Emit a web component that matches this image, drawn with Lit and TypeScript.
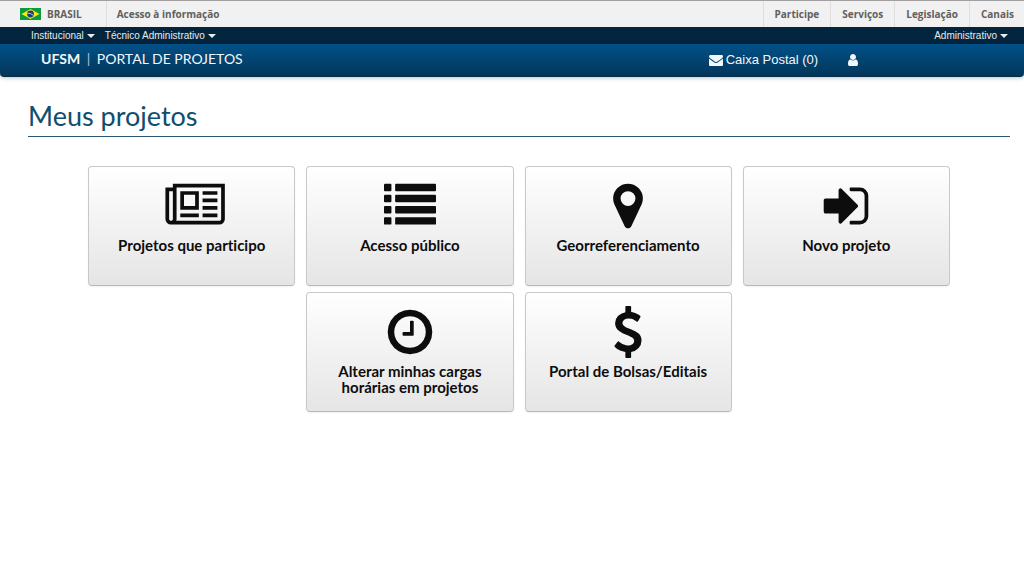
import { LitElement, html, css, svg } from "lit";
import { customElement, property } from "lit/decorators.js";

const ICONS: Record<string, { box: string; body: unknown }> = {
  newspaper: {
    box: "-256 0 2304 1792",
    body: svg`<path d="M1024 512h-384v384h384v-384zm128 640v128h-640v-128h640zm0-768v640h-640v-640h640zm640 768v128h-512v-128h512zm0-256v128h-512v-128h512zm0-256v128h-512v-128h512zm0-256v128h-512v-128h512zm-1536 960v-960h-128v960q0 26 19 45t45 19 45-19 19-45zm1664 0v-1088h-1536v1088q0 33-11 64h1483q26 0 45-19t19-45zm128-1216v1216q0 80-56 136t-136 56h-1664q-80 0-136-56t-56-136v-1088h256v-128h1792z"/>`,
  },
  list: {
    box: "0 0 1792 1792",
    body: [128, 512, 896, 1280].map(
      (y) => svg`<rect x="0" y=${y} width="256" height="256" rx="32"/><rect x="384" y=${y} width="1408" height="256" rx="32"/>`
    ),
  },
  marker: {
    box: "0 0 1792 1792",
    body: svg`<path d="M1152 640q0-106-75-181t-181-75-181 75-75 181 75 181 181 75 181-75 75-181zm256 0q0 109-33 179l-364 774q-16 33-47.5 52t-67.5 19-67.5-19-46.5-52l-365-774q-33-70-33-179 0-212 150-362t362-150 362 150 150 362z"/>`,
  },
  enter: {
    box: "0 0 1792 1792",
    body: svg`<path d="M1312 896q0 26-19 45l-544 544q-19 19-45 19t-45-19-19-45v-288h-448q-26 0-45-19t-19-45v-384q0-26 19-45t45-19h448v-288q0-26 19-45t45-19 45 19l544 544q19 19 19 45zm352-352v704q0 119-84.5 203.5t-203.5 84.5h-320q-13 0-22.5-9.5t-9.5-22.5q0-4-1-20t-.5-26.5 3-23.5 10-19.5 20.5-6.5h320q66 0 113-47t47-113v-704q0-66-47-113t-113-47h-312l-11.5-1-11.5-3-8-5.5-7-9-2-13.5q0-4-1-20t-.5-26.5 3-23.5 10-19.5 20.5-6.5h320q119 0 203.5 84.5t84.5 203.5z"/>`,
  },
  clock: {
    box: "0 0 1792 1792",
    body: svg`<path d="M1024 544v448q0 14-9 23t-23 9h-320q-14 0-23-9t-9-23v-64q0-14 9-23t23-9h224v-352q0-14 9-23t23-9h64q14 0 23 9t9 23zm416 352q0-148-73-273t-198-198-273-73-273 73-198 198-73 273 73 273 198 198 273 73 273-73 198-198 73-273zm224 0q0 209-103 385.5t-279.5 279.5-385.5 103-385.5-103-279.5-279.5-103-385.5 103-385.5 279.5-279.5 385.5-103 385.5 103 279.5 279.5 103 385.5z"/>`,
  },
  dollar: {
    box: "0 0 1792 1792",
    body: svg`<path d="M1362 1185q0 153-99.5 263.5t-258.5 136.5v175q0 14-9 23t-23 9h-135q-13 0-22.5-9.5t-9.5-22.5v-175q-66-9-127.5-31t-101.5-44.5-74-48-46.5-37.5-17.5-18q-17-21-2-41l103-135q7-10 23-12 15-2 24 9l2 2q113 99 243 125 37 8 74 8 81 0 142.5-43t61.5-122q0-28-15-53t-33.5-42-58.5-37.5-66-32-80-32.5q-39-16-61.5-25t-61.5-26.5-62.5-31-56.5-35.5-53.5-42.5-43.5-49-35.5-58-21-66.5-8.5-78q0-138 98-242t255-134v-180q0-13 9.5-22.5t22.5-9.5h135q14 0 23 9t9 23v176q57 6 110.5 23t87 33.5 63.5 37.5 39 29 15 14q17 18 5 38l-81 146q-8 15-23 16-14 3-27-7-3-3-14.5-12t-39-26.5-58.5-32-74.5-26-85.5-11.5q-95 0-155 43t-60 111q0 26 8.5 48t29.5 41.5 39.5 33 56 31 60.5 27 70 27.5q53 20 81 31.5t76 35 75.5 42.5 62 50 53 63.5 31.5 76.5 13 94z"/>`,
  },
  envelope: {
    box: "0 0 1792 1792",
    body: svg`<path d="M1792 710v794q0 66-47 113t-113 47h-1472q-66 0-113-47t-47-113v-794q44 49 101 87 362 246 497 345 57 42 92.5 65.5t94.5 48 110 24.5h2q51 0 110-24.5t94.5-48 92.5-65.5q170-123 498-345 57-39 100-87zm0-294q0 79-49 151t-122 123q-376 261-468 325-10 7-42.5 31t-54 38.5-52 32.5-57.5 27-50 9h-2q-23 0-50-9t-57.5-27-52-32.5-54-38.5-42.5-31q-91-64-262-182.5t-205-142.5q-62-42-117-115.5t-55-136.5q0-78 41.5-130t118.5-52h1472q65 0 112.5 47t47.5 113z"/>`,
  },
  user: {
    box: "0 0 1792 1792",
    body: svg`<path d="M1536 1399q0 109-62.5 187t-150.5 78h-854q-88 0-150.5-78t-62.5-187q0-85 8.5-160.5t31.5-152 58.5-131 94-89 134.5-34.5q131 128 313 128t313-128q76 0 134.5 34.5t94 89 58.5 131 31.5 152 8.5 160.5zm-256-887q0 159-112.5 271.5t-271.5 112.5-271.5-112.5-112.5-271.5 112.5-271.5 271.5-112.5 271.5 112.5 112.5 271.5z"/>`,
  },
};

@customElement("ui-icon")
export class UiIcon extends LitElement {
  @property() name = "list";

  static styles = css`
    :host {
      display: block;
      height: 14px;
    }
    .glyph {
      display: block;
      height: 100%;
      margin: 0 auto;
      fill: currentColor;
    }
  `;

  render() {
    const icon = ICONS[this.name];
    return html`<svg class="glyph" viewBox=${icon.box} aria-hidden="true">${icon.body}</svg>`;
  }
}

@customElement("gov-bar")
export class GovBar extends LitElement {
  static styles = css`
    :host {
      display: block;
      background: #f1f1f1;
      border-top: 1px solid #a09e9e;
      font: 700 10px/26px "Open Sans", sans-serif;
    }
    .bar,
    .links {
      display: flex;
    }
    .links {
      margin-left: auto;
      padding-right: 10px;
    }
    a {
      color: #606060;
      text-decoration: none;
      white-space: nowrap;
      padding: 0 11px;
      border-left: 1px solid #dedede;
    }
    .links a:last-child {
      padding-right: 0;
    }
    .brand {
      display: flex;
      align-items: center;
      gap: 6px;
      padding: 0 24px 0 20px;
      border-left: 0;
    }
    .info {
      padding-left: 10px;
    }
  `;

  render() {
    return html`
      <nav class="bar">
        <a class="brand" href="#">
          <svg width="21" height="12" viewBox="0 0 21 12" aria-hidden="true">
            <rect width="21" height="12" fill="#0b9a3e" />
            <path d="M10.5 1 19.5 6 10.5 11 1.5 6z" fill="#fbe51b" />
            <circle cx="10.5" cy="6" r="3.4" fill="#1c3f78" />
            <path d="M7.3 5.2q3.6-.4 6.1 2.2" fill="none" stroke="#d5e4ea" stroke-width=".8" />
          </svg>
          BRASIL
        </a>
        <a class="info" href="#">Acesso à informação</a>
        <div class="links">
          ${["Participe", "Serviços", "Legislação", "Canais"].map((t) => html`<a href="#">${t}</a>`)}
        </div>
      </nav>
    `;
  }
}

@customElement("portal-header")
export class PortalHeader extends LitElement {
  static styles = css`
    :host {
      display: block;
      color: #fff;
      font-family: "Liberation Sans", Arial, sans-serif;
    }
    .menus {
      display: flex;
      gap: 10px;
      padding: 0 16px 0 31px;
      background: #03253d;
    }
    button {
      display: flex;
      align-items: center;
      gap: 3px;
      padding: 0;
      border: 0;
      background: none;
      color: #e6ebef;
      font: 10px/17px "Liberation Sans", Arial, sans-serif;
    }
    button::after {
      content: "";
      border: 4px solid transparent;
      border-top-color: currentColor;
      border-bottom: 0;
    }
    .end {
      margin-left: auto;
    }
    .main {
      display: flex;
      align-items: center;
      padding: 0 16% 0 41px;
      background: linear-gradient(#015189, #033659);
      border-bottom: 1px solid #032f4e;
      border-radius: 0 0 4px 4px;
      box-shadow: 0 1px 4px rgba(0, 0, 0, 0.25);
      line-height: 32px;
    }
    a {
      color: #f4f7f9;
      text-decoration: none;
    }
    .title {
      font-family: Lato, sans-serif;
      font-size: 14px;
      line-height: 30px;
      padding-bottom: 2px;
    }
    .sep {
      padding: 0 3px;
      opacity: 0.7;
    }
    .mail {
      display: flex;
      align-items: center;
      gap: 3px;
      margin-left: auto;
      margin-right: 28px;
      font-size: 13px;
    }
  `;

  render() {
    return html`
      <div class="menus">
        <button type="button">Institucional</button>
        <button type="button">Técnico Administrativo</button>
        <button type="button" class="end">Administrativo</button>
      </div>
      <header class="main">
        <a class="title" href="#"><b>UFSM</b> <span class="sep">|</span> PORTAL DE PROJETOS</a>
        <a class="mail" href="#"><ui-icon name="envelope"></ui-icon>Caixa Postal (0)</a>
        <a href="#" aria-label="Usuário"><ui-icon name="user"></ui-icon></a>
      </header>
    `;
  }
}

const PROJECT_LINKS = [
  { icon: "newspaper", label: "Projetos que participo" },
  { icon: "list", label: "Acesso público" },
  { icon: "marker", label: "Georreferenciamento" },
  { icon: "enter", label: "Novo projeto" },
  { icon: "clock", label: "Alterar minhas cargas horárias em projetos" },
  { icon: "dollar", label: "Portal de Bolsas/Editais" },
];

@customElement("app-root")
export class AppRoot extends LitElement {
  static styles = css`
    :host {
      display: block;
      min-height: 100vh;
      background: #fff;
    }
    main {
      padding: 22px 14px 24px 28px;
    }
    h1 {
      margin: 0 0 29px;
      padding-bottom: 3px;
      border-bottom: 1px solid #2a5674;
      color: #104e6e;
      font: 400 27px/34px Lato, sans-serif;
    }
    .cards {
      display: flex;
      flex-wrap: wrap;
      justify-content: center;
      gap: 6px 11px;
    }
    .card {
      box-sizing: border-box;
      width: 21.1%;
      min-width: 180px;
      min-height: 120px;
      padding: 13px 20px;
      border: 1px solid #c8c8c8;
      border-bottom-color: #b8b8b8;
      border-radius: 4px;
      background: linear-gradient(#fff, #e5e5e5);
      box-shadow: 0 1px 2px rgba(0, 0, 0, 0.06);
      color: #0d0d0d;
      font: 700 15px/16px Lato, sans-serif;
      font-variant-ligatures: none;
      text-align: center;
      text-decoration: none;
    }
    .card ui-icon {
      height: 52px;
      margin-bottom: 5px;
    }
  `;

  render() {
    return html`
      <gov-bar></gov-bar>
      <portal-header></portal-header>
      <main>
        <h1>Meus projetos</h1>
        <div class="cards">
          ${PROJECT_LINKS.map(
            (l) => html`<a class="card" href="#"><ui-icon name=${l.icon}></ui-icon>${l.label}</a>`
          )}
        </div>
      </main>
    `;
  }
}
